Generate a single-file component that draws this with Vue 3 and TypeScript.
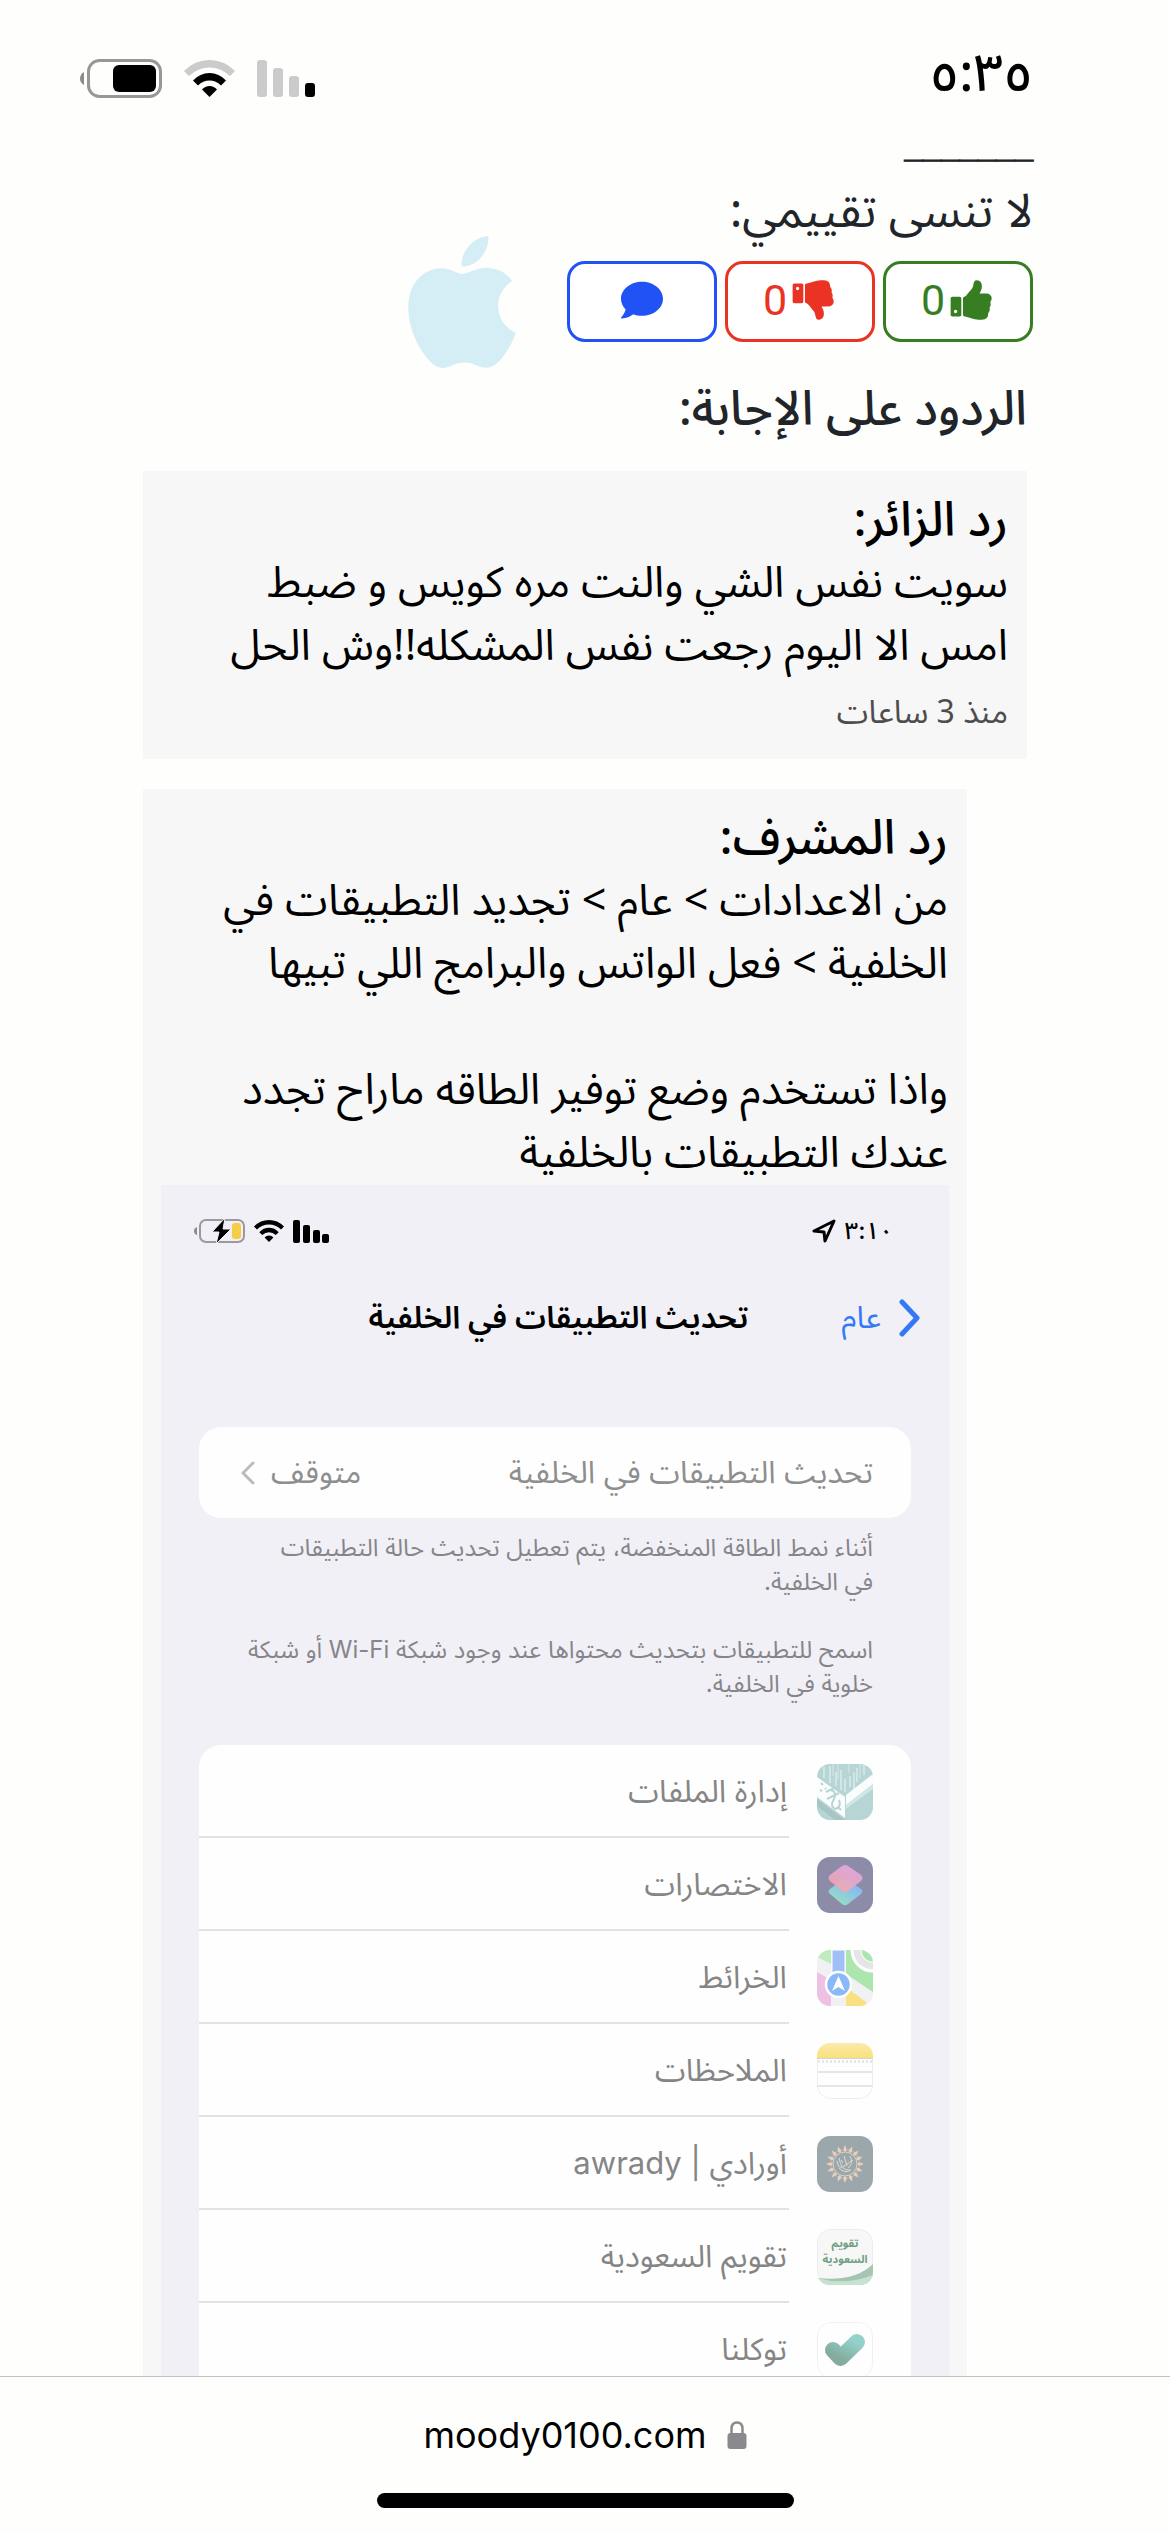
<script setup lang="ts">
interface AppRow {
  name: string
  icon: string
}

const apps: AppRow[] = [
  { name: 'إدارة الملفات', icon: 'files' },
  { name: 'الاختصارات', icon: 'shortcuts' },
  { name: 'الخرائط', icon: 'maps' },
  { name: 'الملاحظات', icon: 'notes' },
  { name: 'أورادي | awrady', icon: 'awrady' },
  { name: 'تقويم السعودية', icon: 'calendar' },
  { name: 'توكلنا', icon: 'tawakkalna' },
]

const petals = Array.from({ length: 16 }, (_, i) => i * 22.5)
</script>

<template>
  <div class="screen" dir="rtl" lang="ar">
    <header class="status">
      <time class="clock">٥:٣٥</time>
      <div class="indicators">
        <svg width="58" height="37" viewBox="0 0 58 37" aria-hidden="true">
          <g fill="#cbcbcb">
            <rect x="0" y="0" width="10" height="37" rx="3" />
            <rect x="16" y="8" width="10" height="29" rx="3" />
            <rect x="32" y="16" width="10" height="21" rx="3" />
          </g>
          <rect x="48" y="23" width="10" height="14" rx="3" />
        </svg>
        <svg width="51" height="37" viewBox="0 0 51 37" aria-hidden="true">
          <path d="M0 11Q11 0 25.500 0T51 11L46 16Q37 7.500 25.500 7.500T5 16Z" fill="#cbcbcb" />
          <path d="M9 20.500Q16 13 25.500 13T42 20.500L37 25.500Q32 20.500 25.500 20.500T14 25.500Z" />
          <path d="M18 29.500Q21 26 25.500 26T33 29.500L25.500 37Z" />
        </svg>
        <svg width="82" height="39" viewBox="0 0 82 39" aria-hidden="true">
          <path d="M4 13Q0 15.500 0 19.500T4 26Z" fill="#8c8c8c" />
          <rect x="8.500" y="1.500" width="72" height="36" rx="11" fill="none" stroke="#979797" stroke-width="3" />
          <rect x="33" y="6" width="43" height="27" rx="6" />
        </svg>
      </div>
    </header>

    <main class="page">
      <p class="rule">_______</p>
      <p class="ask">لا تنسى تقييمي:</p>
      <div class="rating">
        <button type="button" class="rate up" aria-label="أعجبني">
          <svg width="46" height="46" viewBox="0 0 1792 1792" aria-hidden="true">
            <path d="M320 1344q0-26-19-45t-45-19q-27 0-45.500 19t-18.500 45q0 27 18.500 45.500t45.500 18.500q26 0 45-18.500t19-45.500zm160-512v640q0 26-19 45t-45 19h-288q-26 0-45-19t-19-45v-640q0-26 19-45t45-19h288q26 0 45 19t19 45zm1184 0q0 86-55 149 15 44 15 76 3 76-43 137 17 56 0 117-15 57-54 94 9 112-49 181-64 76-197 78h-129q-66 0-144-15.500t-121.500-29-120.500-39.500q-123-43-158-44-26-1-45-19.500t-19-44.500v-641q0-25 18-43.500t43-20.500q24-2 76-59t101-121q68-87 101-120 18-18 31-48t17.500-48.500 13.500-60.500q7-39 12.500-61t19.500-52 34-50q19-19 45-19 46 0 82.500 10.500t60 26 40 40.500 24 45 12 50 5 45 .5 39q0 38-9.500 76t-19 60-27.500 56q-3 6-10 18t-11 22-8 24h277q78 0 135 57t57 135z" />
          </svg>
          <span>0</span>
        </button>
        <button type="button" class="rate down" aria-label="لم يعجبني">
          <svg width="46" height="46" viewBox="0 0 1792 1792" aria-hidden="true">
            <path transform="matrix(1 0 0 -1 0 1792)" d="M320 1344q0-26-19-45t-45-19q-27 0-45.500 19t-18.500 45q0 27 18.500 45.500t45.500 18.500q26 0 45-18.500t19-45.500zm160-512v640q0 26-19 45t-45 19h-288q-26 0-45-19t-19-45v-640q0-26 19-45t45-19h288q26 0 45 19t19 45zm1184 0q0 86-55 149 15 44 15 76 3 76-43 137 17 56 0 117-15 57-54 94 9 112-49 181-64 76-197 78h-129q-66 0-144-15.500t-121.500-29-120.500-39.500q-123-43-158-44-26-1-45-19.500t-19-44.500v-641q0-25 18-43.500t43-20.500q24-2 76-59t101-121q68-87 101-120 18-18 31-48t17.500-48.500 13.500-60.500q7-39 12.500-61t19.500-52 34-50q19-19 45-19 46 0 82.500 10.500t60 26 40 40.500 24 45 12 50 5 45 .5 39q0 38-9.500 76t-19 60-27.500 56q-3 6-10 18t-11 22-8 24h277q78 0 135 57t57 135z" />
          </svg>
          <span>0</span>
        </button>
        <button type="button" class="rate talk" aria-label="تعليق">
          <svg width="42" height="42" viewBox="0 0 512 512" aria-hidden="true">
            <path d="M256 32C114.600 32 0 125.100 0 240c0 49.600 21.400 95 57 130.700C44.500 421.100 2.700 466 2.200 466.500c-2.200 2.300-2.800 5.700-1.500 8.700S4.800 480 8 480c66.300 0 116-31.800 140.600-51.400 32.700 12.300 69 19.400 107.400 19.400 141.400 0 256-93.100 256-208S397.400 32 256 32z" />
          </svg>
        </button>
        <svg class="apple" width="108" height="132" viewBox="2.200 0 19.600 24" aria-hidden="true">
          <path d="M12.152 6.896c-.948 0-2.415-1.078-3.960-1.040-2.040.027-3.910 1.183-4.961 3.014-2.117 3.675-.546 9.103 1.519 12.090 1.013 1.454 2.208 3.090 3.792 3.039 1.520-.065 2.090-.987 3.935-.987 1.831 0 2.350.987 3.960.948 1.637-.026 2.676-1.480 3.676-2.948 1.156-1.688 1.636-3.325 1.662-3.415-.039-.013-3.182-1.221-3.220-4.857-.026-3.040 2.480-4.494 2.597-4.559-1.429-2.090-3.623-2.324-4.390-2.376-2-.156-3.675 1.090-4.610 1.090zM15.530 3.830c.843-1.012 1.400-2.427 1.245-3.830-1.207.052-2.662.805-3.532 1.818-.780.896-1.454 2.338-1.273 3.714 1.338.104 2.715-.688 3.559-1.701" />
        </svg>
      </div>

      <h2 class="replies-title">الردود على الإجابة:</h2>

      <article class="reply">
        <h3>رد الزائر:</h3>
        <p>سويت نفس الشي والنت مره كويس و ضبط<br />امس الا اليوم رجعت نفس المشكله!!وش الحل</p>
        <small>منذ 3 ساعات</small>
      </article>

      <article class="reply admin">
        <h3>رد المشرف:</h3>
        <p>من الاعدادات &gt; عام &gt; تجديد التطبيقات في<br />الخلفية &gt; فعل الواتس والبرامج اللي تبيها</p>
        <p class="second">واذا تستخدم وضع توفير الطاقه ماراح تجدد<br />عندك التطبيقات بالخلفية</p>

        <section class="phone">
          <div class="phone-status">
            <div class="phone-time">
              <time>٣:١٠</time>
              <svg width="24" height="24" viewBox="0 0 24 24" aria-hidden="true">
                <path d="M22 2L2 12L12 13L13 22Z" fill="none" stroke="#000" stroke-width="3" stroke-linejoin="round" />
              </svg>
            </div>
            <div class="phone-indicators">
              <svg width="36" height="23" viewBox="0 0 36 23" aria-hidden="true">
                <rect x="0" y="0" width="7" height="23" rx="2" />
                <rect x="10" y="5" width="7" height="18" rx="2" />
                <rect x="20" y="10" width="7" height="13" rx="2" />
                <rect x="29" y="14" width="7" height="9" rx="2" />
              </svg>
              <svg width="30" height="22" viewBox="0 0 51 37" aria-hidden="true">
                <path d="M0 11Q11 0 25.500 0T51 11L46 16Q37 7.500 25.500 7.500T5 16Z" />
                <path d="M9 20.500Q16 13 25.500 13T42 20.500L37 25.500Q32 20.500 25.500 20.500T14 25.500Z" />
                <path d="M18 29.500Q21 26 25.500 26T33 29.500L25.500 37Z" />
              </svg>
              <svg width="51" height="24" viewBox="0 0 51 24" aria-hidden="true">
                <path d="M3 8Q0 9 0 12T3 16Z" fill="#8c8c90" />
                <rect x="6" y="1" width="44" height="22" rx="6" fill="none" stroke="#9a9a9e" stroke-width="2" />
                <rect x="38" y="4" width="9" height="16" rx="3" fill="#f5cd46" />
                <path d="M31 -1L18 13H25L22 25L37 10H29Z" stroke="#f1f0f6" stroke-width="1" />
              </svg>
            </div>
          </div>

          <nav class="phone-nav">
            <a href="#general">
              <svg width="22" height="38" viewBox="0 0 22 38" aria-hidden="true">
                <path d="M3 3L18 19L3 35" fill="none" stroke="#3478f6" stroke-width="5" stroke-linecap="round" stroke-linejoin="round" />
              </svg>
              <span>عام</span>
            </a>
            <h4>تحديث التطبيقات في الخلفية</h4>
          </nav>

          <a class="toggle" href="#refresh">
            <span>تحديث التطبيقات في الخلفية</span>
            <span class="value">
              متوقف
              <svg width="14" height="24" viewBox="0 0 14 24" aria-hidden="true">
                <path d="M12 2L2 12L12 22" fill="none" stroke="#bcbcbe" stroke-width="3" stroke-linecap="round" stroke-linejoin="round" />
              </svg>
            </span>
          </a>

          <div class="notes">
            <p>أثناء نمط الطاقة المنخفضة، يتم تعطيل تحديث حالة التطبيقات<br />في الخلفية.</p>
            <p>اسمح للتطبيقات بتحديث محتواها عند وجود شبكة Wi-Fi أو شبكة<br />خلوية في الخلفية.</p>
          </div>

          <ul class="apps">
            <li v-for="app in apps" :key="app.icon">
              <svg class="icon" width="56" height="56" viewBox="0 0 56 56" aria-hidden="true">
                <defs>
                  <clipPath :id="'clip-' + app.icon"><rect width="56" height="56" rx="13" /></clipPath>
                  <linearGradient id="pink" x1="0.800" y1="0" x2="0.200" y2="1">
                    <stop offset="0" stop-color="#e6a9ee" />
                    <stop offset="1" stop-color="#f6a79f" />
                  </linearGradient>
                  <linearGradient id="aqua" x1="0.900" y1="0.200" x2="0.300" y2="1">
                    <stop offset="0" stop-color="#86b4fa" />
                    <stop offset="1" stop-color="#96e0c0" />
                  </linearGradient>
                  <linearGradient id="tick" x1="1" y1="0" x2="0.200" y2="1">
                    <stop offset="0" stop-color="#93d2cc" />
                    <stop offset="1" stop-color="#84ab9e" />
                  </linearGradient>
                  <linearGradient id="gold" x1="0" y1="0" x2="0" y2="1">
                    <stop offset="0" stop-color="#fbe9ad" />
                    <stop offset="1" stop-color="#f9e27c" />
                  </linearGradient>
                </defs>
                <g :clip-path="'url(#clip-' + app.icon + ')'">
                  <template v-if="app.icon === 'files'">
                    <rect width="56" height="56" fill="#b7d5d5" />
                    <path d="M7 3V14M13 2V19M19 8V22M24 6V26M28 15V28M33 12V23M37 8V25M40 4V18M47 1V11" stroke="#edf6f6" stroke-width="1" />
                    <path d="M16 0V12M21 0V15M32 0V9M43 0V14" stroke="#d6e8e8" stroke-width="1" />
                    <path d="M0 13L28 33V54L0 33Z" fill="#fbfdfd" />
                    <path d="M9 28L19 23M10 35L22 29M14 26Q21 28 16 37Q13 42 18 45Q25 43 22 36" fill="none" stroke="#b7d5d5" stroke-width="2" />
                    <path d="M4 19l2 2M8 24l1 1M3 26l2 1M21 43l3 3" stroke="#b7d5d5" stroke-width="2" />
                    <path d="M29 31L56 10V20L29 41Z" fill="#fbfdfd" />
                    <path d="M29 41L56 20V25L29 45Z" fill="#cde9e5" />
                    <path d="M0 35L28 56H18L0 42Z" fill="#a8c5c6" />
                  </template>
                  <template v-else-if="app.icon === 'shortcuts'">
                    <rect width="56" height="56" fill="#8c8ca8" />
                    <path d="M25 23L13 32Q10 34.500 13 37L25 47Q28 49.500 31 47L44 37Q47 34.500 44 32L31 23Z" fill="url(#aqua)" />
                    <path d="M25 9L13 18Q10 21 13 24L25 34Q28 36.500 31 34L44 24Q47 21 44 18L31 9Q28 7 25 9Z" fill="url(#pink)" opacity="0.880" />
                  </template>
                  <template v-else-if="app.icon === 'maps'">
                    <rect width="56" height="56" fill="#f1f1f4" />
                    <path d="M0 0H14V14L0 7Z" fill="#bfecbc" />
                    <path d="M0 22L14 30V56H0Z" fill="#edc1e2" />
                    <path d="M29 0H56V42L29 24Z" fill="#aae6ad" />
                    <path d="M29 37L49 52V56H29Z" fill="#f9e182" />
                    <circle cx="56" cy="0" r="17" fill="none" stroke="#fff" stroke-width="11" />
                    <circle cx="56" cy="0" r="16" fill="none" stroke="#e5e5e7" stroke-width="7" />
                    <path d="M15 0H28V26H15Z" fill="#9fbff6" stroke="#fff" />
                    <circle cx="21.500" cy="34.500" r="12.500" fill="#8bb9f8" stroke="#fff" stroke-width="2.500" />
                    <path d="M21.500 26L28 41L21.500 37L15 41Z" fill="#fff" />
                  </template>
                  <template v-else-if="app.icon === 'notes'">
                    <rect x="0.500" y="0.500" width="55" height="55" rx="13" fill="#fefefe" stroke="#ececec" />
                    <rect width="56" height="15" fill="url(#gold)" />
                    <path d="M0 15.500H56" stroke="#d4d2cc" />
                    <path d="M1 18.500H56" stroke="#ddd" stroke-width="2" stroke-dasharray="2 2" />
                    <path d="M0 29H56M0 43H56" stroke="#e6e6e6" stroke-width="2" />
                  </template>
                  <template v-else-if="app.icon === 'awrady'">
                    <rect width="56" height="56" fill="#9ca7ac" />
                    <g v-for="angle in petals" :key="angle" :transform="'rotate(' + angle + ' 28 28)'">
                      <path d="M28 9L30 14L28 16L26 14Z" fill="#ddd6c4" />
                      <circle cx="31" cy="14" r="1.300" fill="#cf9f95" />
                    </g>
                    <circle cx="28" cy="28" r="12" fill="none" stroke="#d8d2c2" stroke-width="1" />
                    <path d="M20 25Q21 34 27 30T36 24M22 22Q24 35 33 34M27 20L30 30M33 20Q37 27 31 32M22 32Q28 38 34 34M24 24L26 27" fill="none" stroke="#dedacf" stroke-width="1" />
                  </template>
                  <template v-else-if="app.icon === 'calendar'">
                    <rect x="0.500" y="0.500" width="55" height="55" rx="13" fill="#f6f7f6" stroke="#ebecec" />
                    <path d="M0 49Q38 53 56 35V56H0Z" fill="#a7c3b2" />
                    <path d="M0 49Q28 57 56 46V56H0Z" fill="#c5e3d0" />
                    <text x="28" y="18" class="tiny">تقويم</text>
                    <text x="28" y="34" class="tiny">السعودية</text>
                  </template>
                  <template v-else>
                    <rect x="0.500" y="0.500" width="55" height="55" rx="13" fill="#fefefe" stroke="#f0f0f0" />
                    <path d="M16 28L23.500 36L40 20" fill="none" stroke="url(#tick)" stroke-width="16" stroke-linecap="round" stroke-linejoin="round" />
                  </template>
                </g>
              </svg>
              <span>{{ app.name }}</span>
            </li>
          </ul>
        </section>
      </article>
    </main>

    <footer class="browser">
      <a class="address" href="https://moody0100.com">
        <svg width="20" height="28" viewBox="0 0 20 28" aria-hidden="true">
          <path d="M4.500 13V8Q4.500 1.500 10 1.500T15.500 8V13" fill="none" stroke="#8a8a8e" stroke-width="2.500" />
          <rect x="0.500" y="12" width="19" height="16" rx="3" fill="#8a8a8e" />
        </svg>
        <span>moody0100.com</span>
      </a>
      <div class="home"></div>
    </footer>
  </div>
</template>

<style>
body {
  margin: 0;
  background: #fefefd;
}
</style>

<style scoped>
.screen {
  display: flex;
  flex-direction: column;
  height: 100vh;
  overflow: hidden;
  background: #fefefd;
  color: #212529;
  font-family: 'Noto Sans Arabic', 'Noto Kufi Arabic', 'DejaVu Sans', sans-serif;
  white-space: nowrap;
}

h2,
h3,
h4,
p,
ul {
  margin: 0;
  padding: 0;
}

a {
  color: inherit;
  text-decoration: none;
}

svg {
  display: block;
  flex: none;
}

.status {
  flex: none;
  display: flex;
  align-items: center;
  justify-content: space-between;
  box-sizing: border-box;
  height: 120px;
  padding: 36px 137px 0 80px;
  color: #000;
}

.clock {
  padding-bottom: 6px;
  font-size: 52px;
  font-weight: 500;
  line-height: 76px;
}

.indicators {
  display: flex;
  align-items: center;
  gap: 22px;
}

.page {
  flex: 1;
  min-height: 0;
  overflow: hidden;
  padding: 0 137px 0 143px;
}

.rule {
  height: 60px;
  font: bold 33px / 52px 'Liberation Sans', sans-serif;
  -webkit-text-stroke: 1px #212529;
}

.ask {
  font-size: 47px;
  line-height: 64px;
}

.rating {
  display: flex;
  align-items: center;
  gap: 8px;
  height: 81px;
  margin-top: 17px;
}

.rate {
  display: flex;
  align-items: center;
  justify-content: center;
  gap: 4px;
  box-sizing: border-box;
  width: 150px;
  height: 81px;
  padding: 0 0 4px;
  border: 3px solid currentColor;
  border-radius: 18px;
  background: #fff;
  font: 43px / 60px Roboto, sans-serif;
}

.rate svg {
  fill: currentColor;
}

.up {
  color: #377e22;
}

.down {
  color: #ea3323;
}

.talk {
  color: #2152f5;
}

.apple {
  margin: -26px 43px;
  fill: #d5edf5;
}

.replies-title {
  margin: 36px 6px 30px;
  font-size: 48px;
  font-weight: 500;
  line-height: 63px;
}

.reply {
  padding: 18px 19px 11px;
  margin-inline-start: 6px;
  background: #f7f7f7;
  color: #000;
}

.reply h3,
.reply p {
  font-size: 43px;
  font-weight: 400;
  line-height: 63px;
}

.reply h3 {
  font-size: 48px;
  font-weight: 500;
}

.reply small {
  display: block;
  color: #4d4d4d;
  font-size: 32px;
  line-height: 70px;
}

.admin {
  margin-top: 30px;
  margin-inline-start: 66px;
}

.admin .second {
  margin-top: 63px;
}

.phone {
  margin: 0 -1px;
  padding: 34px 38px 0;
  background: #f1f0f6;
  font-family: Inter, 'Noto Sans Arabic', 'Noto Kufi Arabic', 'DejaVu Sans', sans-serif;
}

.phone-status {
  display: flex;
  align-items: center;
  justify-content: space-between;
  height: 24px;
  padding: 0 18px 0 0;
  margin-left: -5px;
}

.phone-time,
.phone-indicators {
  display: flex;
  align-items: center;
  gap: 9px;
}

.phone-time time {
  font-size: 24px;
  font-weight: 500;
  line-height: 36px;
}

.phone-nav {
  display: flex;
  align-items: center;
  height: 38px;
  margin-top: 56px;
}

.phone-nav a {
  display: flex;
  align-items: center;
  gap: 18px;
  margin-right: -10px;
  color: #3478f6;
  font-size: 31px;
}

.phone-nav h4 {
  margin-right: 93px;
  font-size: 31px;
  font-weight: 600;
}

.toggle {
  display: flex;
  align-items: center;
  justify-content: space-between;
  box-sizing: border-box;
  height: 91px;
  margin-top: 90px;
  padding: 0 38px 0 42px;
  border-radius: 22px;
  background: #fefefe;
  color: #8e8e8e;
  font-size: 31px;
}

.value {
  display: flex;
  align-items: center;
  gap: 16px;
}

.notes {
  padding: 13px 38px 0;
  color: #85858a;
}

.reply .notes p {
  margin-bottom: 34px;
  font-size: 24px;
  line-height: 34px;
}

.apps {
  list-style: none;
  margin-top: 44px;
  border-radius: 22px 22px 0 0;
  background: #fefefe;
}

.apps li {
  display: flex;
  align-items: center;
  gap: 28px;
  height: 93px;
  padding-right: 38px;
  color: #858585;
  font-size: 31px;
}

.apps span {
  flex: 1;
  padding-right: 2px;
  line-height: 91px;
  border-bottom: 2px solid #e2e2e3;
}

.tiny {
  fill: #6f9f83;
  font-size: 11px;
  font-weight: 700;
  text-anchor: middle;
}

.browser {
  flex: none;
  display: flex;
  flex-direction: column;
  align-items: center;
  height: 155px;
  border-top: 1px solid #c2c2c5;
  background: #fefefd;
}

.address {
  display: flex;
  align-items: center;
  gap: 20px;
  margin-top: 34px;
  color: #000;
  font: 36px / 48px Inter, sans-serif;
}

.home {
  width: 417px;
  height: 15px;
  margin-top: 34px;
  border-radius: 8px;
  background: #000;
}
</style>
